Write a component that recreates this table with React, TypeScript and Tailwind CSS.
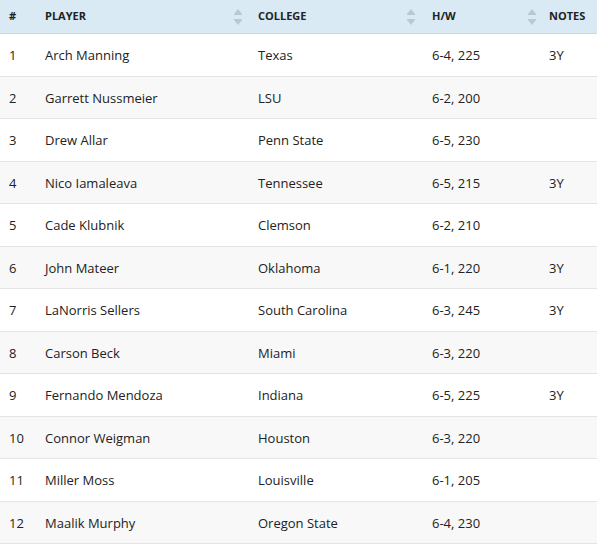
import React from "react";

const rows: [string, string, string, string, string][] = [
  ["1", "Arch Manning", "Texas", "6-4, 225", "3Y"],
  ["2", "Garrett Nussmeier", "LSU", "6-2, 200", ""],
  ["3", "Drew Allar", "Penn State", "6-5, 230", ""],
  ["4", "Nico Iamaleava", "Tennessee", "6-5, 215", "3Y"],
  ["5", "Cade Klubnik", "Clemson", "6-2, 210", ""],
  ["6", "John Mateer", "Oklahoma", "6-1, 220", "3Y"],
  ["7", "LaNorris Sellers", "South Carolina", "6-3, 245", "3Y"],
  ["8", "Carson Beck", "Miami", "6-3, 220", ""],
  ["9", "Fernando Mendoza", "Indiana", "6-5, 225", "3Y"],
  ["10", "Connor Weigman", "Houston", "6-3, 220", ""],
  ["11", "Miller Moss", "Louisville", "6-1, 205", ""],
  ["12", "Maalik Murphy", "Oregon State", "6-4, 230", ""],
];

function SortIcon() {
  return (
    <svg width="8" height="16" viewBox="0 0 8 16" className="shrink-0">
      <polygon points="4,0 8,5 8,6 0,6 0,5" fill="#b7c9d6" />
      <polygon points="0,10 8,10 8,11 4,16 0,11" fill="#b7c9d6" />
    </svg>
  );
}

const grid = "grid grid-cols-[36px_213px_174px_117px_57px]";

export default function App() {
  return (
    <div
      className="w-[597px] bg-white text-[#222]"
      style={{ fontFamily: "'Open Sans', 'Liberation Sans', sans-serif" }}
    >
      <div className={`${grid} h-[34px] bg-[#d9eaf4] border-b border-[#c9d9e4] text-[11px] font-bold text-[#222] items-center`}>
        <div className="pl-[9px]">#</div>
        <div className="pl-[9px] pr-[7px] flex items-center justify-between">
          <span>PLAYER</span>
          <SortIcon />
        </div>
        <div className="pl-[9px] pr-[8px] flex items-center justify-between">
          <span>COLLEGE</span>
          <SortIcon />
        </div>
        <div className="pl-[9px] pr-[4px] flex items-center justify-between">
          <span>H/W</span>
          <SortIcon />
        </div>
        <div className="pl-[9px]">NOTES</div>
      </div>
      {rows.map((r, i) => (
        <div
          key={i}
          className={`${grid} h-[42.5px] items-center pt-[2px] border-b border-[#e4e4e4] text-[13px] ${i % 2 === 1 ? "bg-[#f8f8f8]" : "bg-white"}`}
        >
          <div className="pl-[9px]">{r[0]}</div>
          <div className="pl-[9px]">{r[1]}</div>
          <div className="pl-[9px]">{r[2]}</div>
          <div className="pl-[9px]">{r[3]}</div>
          <div className="pl-[9px]">{r[4]}</div>
        </div>
      ))}
    </div>
  );
}
